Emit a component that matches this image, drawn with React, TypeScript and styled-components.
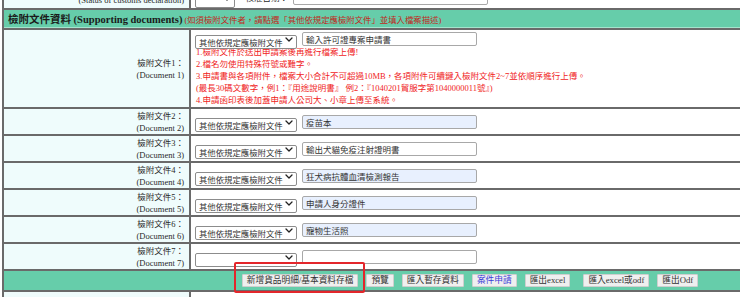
import React from 'react';
import styled, {createGlobalStyle} from 'styled-components';

const LINE = '#6a6a6a';
const DOC_TYPE = '其他依規定應檢附文件';

interface DocRow {
    no: number;
    type: string;
    desc: string;
    filled: boolean;
}

const documents: DocRow[] = [
    {no: 2, type: DOC_TYPE, desc: '疫苗本', filled: true},
    {no: 3, type: DOC_TYPE, desc: '輸出犬貓免疫注射證明書', filled: false},
    {no: 4, type: DOC_TYPE, desc: '狂犬病抗體血清檢測報告', filled: true},
    {no: 5, type: DOC_TYPE, desc: '申請人身分證件', filled: true},
    {no: 6, type: DOC_TYPE, desc: '寵物生活照', filled: true},
    {no: 7, type: '', desc: '', filled: false},
]

const notes = [
    '1.檢附文件於送出申請案後再進行檔案上傳!',
    '2.檔名勿使用特殊符號或難字。',
    '3.申請書與各項附件，檔案大小合計不可超過10MB，各項附件可續鍵入檢附文件2~7並依順序進行上傳。',
    '(最長30碼文數字，例1：『用途說明書』 例2：『1040201貿服字第1040000011號』)',
    '4.申請函印表後加蓋申請人公司大、小章上傳至系統。',
]

const actions = [
    {label: '新增貨品明細/基本資料存檔', highlight: true},
    {label: '預覽'},
    {label: '匯入暫存資料'},
    {label: '案件申請', primary: true},
    {label: '匯出excel'},
    {label: '匯入excel或odf', spaced: true},
    {label: '匯出Odf'},
]

const Chevron = () => (
    <ChevronIcon width="8" height="5" viewBox="0 0 8 5">
        <path d="M1 1l3 3 3-3" fill="none" stroke="#222" strokeWidth="1.3" strokeLinecap="round" strokeLinejoin="round"/>
    </ChevronIcon>
)

interface TypeSelectProps {
    value: string;
    width?: number;
}

const TypeSelect = ({value, width}: TypeSelectProps) => (
    <SelectBox $width={width}>
        <NativeSelect defaultValue={value}>
            <option value={''}></option>
            <option value={DOC_TYPE}>{DOC_TYPE}</option>
        </NativeSelect>
        <Chevron/>
    </SelectBox>
)

const App = () => {
    return (
        <Page>
            <GlobalStyle/>
            <FormTable>
                <tbody>
                <Row $height={30}>
                    <LabelCell>
                        報關狀態：<br/>
                        (Status of customs declaration)
                    </LabelCell>
                    <FieldCell $align={'bottom'}>
                        <FieldLine>
                            <TypeSelect value={''} width={40}/>
                            <InlineLabel>核准日期：</InlineLabel>
                            <DescInput $width={195} defaultValue={''}/>
                        </FieldLine>
                    </FieldCell>
                </Row>
                <Row $height={20}>
                    <SectionHeader colSpan={2}>
                        <SectionTitle>檢附文件資料 (Supporting documents)</SectionTitle>
                        <SectionHint>(如須檢附文件者，請點選「其他依規定應檢附文件」並填入檔案描述)</SectionHint>
                    </SectionHeader>
                </Row>
                <Row $height={79}>
                    <LabelCell>
                        檢附文件1：<br/>
                        (Document 1)
                    </LabelCell>
                    <FieldCell $align={'top'}>
                        <FieldLine>
                            <TypeSelect value={DOC_TYPE}/>
                            <DescInput defaultValue={'輸入許可證專案申請書'}/>
                        </FieldLine>
                        <Notes>
                            {notes.map((note, index) => <Note key={index}>{note}</Note>)}
                        </Notes>
                    </FieldCell>
                </Row>
                {documents.map((doc) => (
                    <Row key={doc.no} $height={27}>
                        <LabelCell>
                            檢附文件{doc.no}：<br/>
                            (Document {doc.no})
                        </LabelCell>
                        <FieldCell>
                            <FieldLine>
                                <TypeSelect value={doc.type}/>
                                <DescInput $filled={doc.filled} defaultValue={doc.desc}/>
                            </FieldLine>
                        </FieldCell>
                    </Row>
                ))}
                <Row $height={21}>
                    <ActionCell colSpan={2}>
                        <ActionBar>
                            {actions.map((action, index) => {
                                const button = (
                                    <ActionButton key={index} $primary={action.primary} $spaced={action.spaced}>
                                        {action.label}
                                    </ActionButton>
                                )
                                return action.highlight
                                    ? <Highlight key={index}>{button}</Highlight>
                                    : button
                            })}
                        </ActionBar>
                    </ActionCell>
                </Row>
                <Row $height={24}>
                    <LabelCell $last>備註：</LabelCell>
                    <FieldCell $last/>
                </Row>
                </tbody>
            </FormTable>
        </Page>
    );
};

const GlobalStyle = createGlobalStyle`
  html, body {
    margin: 0;
    padding: 0;
    overflow: hidden;
    background: #fff;
  }
  body {
    font-family: "Liberation Serif", "Noto Sans CJK TC", serif;
    color: #222;
  }
  * {
    box-sizing: border-box;
  }
`
const Page = styled.div`
  width: 740px;
  height: 297px;
  overflow: hidden;
`
const FormTable = styled.table`
  table-layout: fixed;
  width: 934px;
  margin: -20px 0 0 2px;
  border-collapse: separate;
  border-spacing: 0;
  border-left: 2px solid ${LINE};
  font-family: "Liberation Serif", "Noto Sans CJK TC", serif;
`
const Row = styled.tr<{ $height: number }>`
  height: ${({$height}) => $height}px;
`
const LabelCell = styled.td<{ $last?: boolean }>`
  width: 187px;
  padding: 0 5px 0 0;
  background: #effcfc;
  border-right: 2px solid ${LINE};
  border-bottom: ${({$last}) => $last ? 'none' : `2px solid ${LINE}`};
  text-align: right;
  vertical-align: middle;
  font-size: 8.5px;
  line-height: 12px;
  color: #2a2a2a;
  white-space: nowrap;
`
const FieldCell = styled.td<{ $align?: 'top' | 'middle' | 'bottom', $last?: boolean }>`
  padding: ${({$align}) => $align === 'top' ? '2px 0 0 4px' : $align === 'bottom' ? '0 0 3px 4px' : '0 0 0 4px'};
  background: #fff;
  border-bottom: ${({$last}) => $last ? 'none' : `2px solid ${LINE}`};
  vertical-align: ${({$align}) => $align ?? 'middle'};
`
const FieldLine = styled.div`
  display: flex;
  align-items: center;
  gap: 5px;
  height: 14px;
`
const InlineLabel = styled.span`
  width: 48px;
  text-align: right;
  font-size: 8.5px;
  line-height: 12px;
  color: #2a2a2a;
`
const SelectBox = styled.div<{ $width?: number }>`
  position: relative;
  width: ${({$width}) => $width ?? 102}px;
  height: 14px;
  flex: none;
`
const NativeSelect = styled.select`
  appearance: none;
  width: 100%;
  height: 100%;
  margin: 0;
  padding: 0 0 0 3px;
  font-family: "Noto Sans CJK TC", sans-serif;
  font-size: 8.4px;
  line-height: 12px;
  color: #333;
  background: #fff;
  border: 1px solid #8c8c8c;
  border-radius: 2px;
  outline: none;
`
const ChevronIcon = styled.svg`
  position: absolute;
  top: 5px;
  right: 4px;
  pointer-events: none;
`
const DescInput = styled.input<{ $filled?: boolean, $width?: number }>`
  width: ${({$width}) => $width ?? 175}px;
  height: 14px;
  margin: 0;
  padding: 0 3px;
  font-family: "Noto Sans CJK TC", sans-serif;
  font-size: 8.5px;
  color: #333;
  background: ${({$filled}) => $filled ? '#e8f0fe' : '#fff'};
  border: 1px solid #a8a8a8;
  border-radius: 2px;
  outline: none;
`
const Notes = styled.div`
  padding-left: 1px;
`
const Note = styled.div`
  height: 12.1px;
  font-size: 8.5px;
  line-height: 12.1px;
  color: #f01c1c;
  white-space: nowrap;
`
const SectionHeader = styled.td`
  height: 20px;
  padding: 0 0 0 4px;
  background: #66cdaa;
  border-bottom: 2px solid ${LINE};
  box-shadow: inset 0 -1px 0 #a4e4cd;
  vertical-align: middle;
  white-space: nowrap;
  line-height: 12px;
`
const SectionTitle = styled.span`
  font-size: 10.5px;
  line-height: 12px;
  font-weight: bold;
  color: #1b1b1b;
`
const SectionHint = styled.span`
  margin-left: 2px;
  font-size: 8.4px;
  line-height: 12px;
  color: #c0281c;
`
const ActionCell = styled.td`
  padding: 0;
  background: #66cdaa;
  border-bottom: 2px solid ${LINE};
  vertical-align: middle;
`
const ActionBar = styled.div`
  display: flex;
  justify-content: center;
  align-items: center;
  gap: 8px;
`
const ActionButton = styled.button<{ $primary?: boolean, $spaced?: boolean }>`
  height: 13px;
  margin: 0 0 0 ${({$spaced}) => $spaced ? '5px' : '0'};
  padding: 0 4px;
  font-family: "Liberation Serif", "Noto Sans CJK TC", serif;
  font-size: 8.7px;
  line-height: 11px;
  color: ${({$primary}) => $primary ? '#3a3ad8' : '#333'};
  background: #efefef;
  border: 1px solid #cfcfcf;
  border-radius: 1px;
  white-space: nowrap;
`
const Highlight = styled.span`
  position: relative;
  display: inline-flex;

  &::after {
    content: '';
    position: absolute;
    top: -12px;
    bottom: -6px;
    left: -8px;
    right: -7px;
    border: 2px solid #e3262b;
    border-radius: 2px;
    pointer-events: none;
  }
`
export default App;
